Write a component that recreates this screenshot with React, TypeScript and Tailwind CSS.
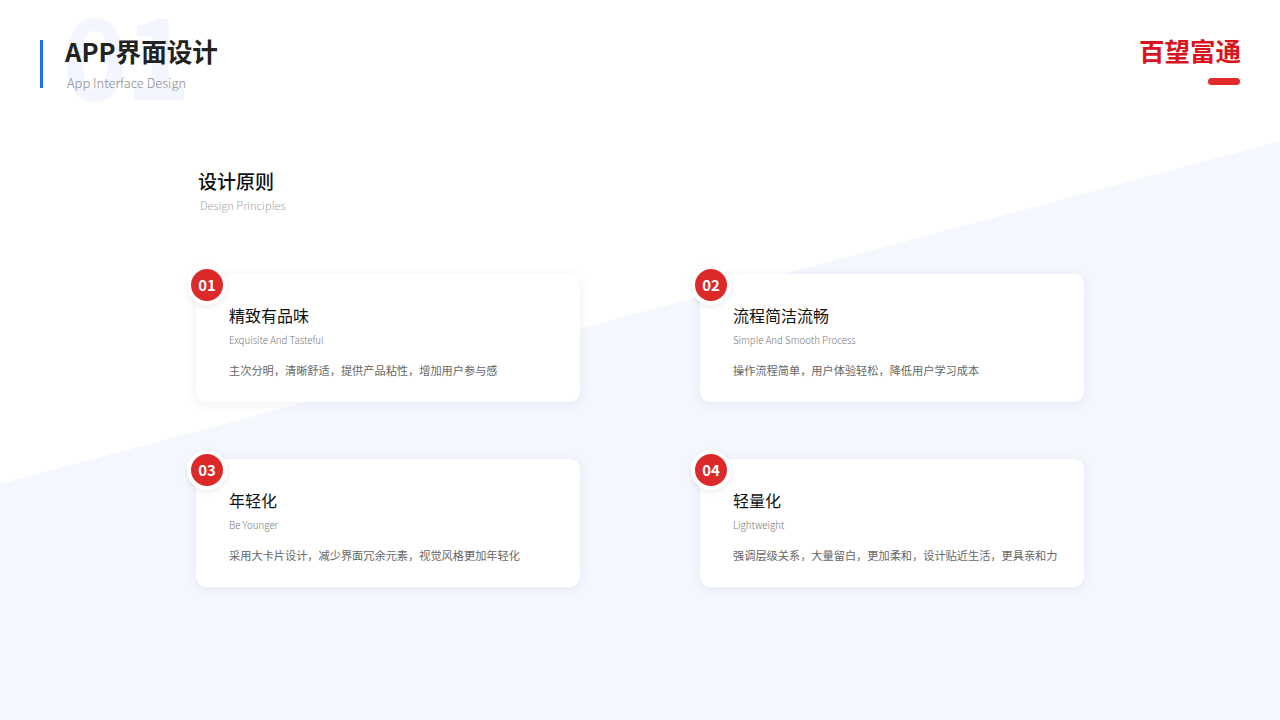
import React from "react";

const cjk = "font-['Noto_Sans_CJK_SC','Noto_Sans',sans-serif]";

const principles = [
  { no: "01", title: "精致有品味", en: "Exquisite And Tasteful", desc: "主次分明，清晰舒适，提供产品粘性，增加用户参与感" },
  { no: "02", title: "流程简洁流畅", en: "Simple And Smooth Process", desc: "操作流程简单，用户体验轻松，降低用户学习成本" },
  { no: "03", title: "年轻化", en: "Be Younger", desc: "采用大卡片设计，减少界面冗余元素，视觉风格更加年轻化" },
  { no: "04", title: "轻量化", en: "Lightweight", desc: "强调层级关系，大量留白，更加柔和，设计贴近生活，更具亲和力" },
];

function Card({ no, title, en, desc }: { no: string; title: string; en: string; desc: string }) {
  return (
    <div className="relative h-[128px] rounded-[10px] bg-white pl-[33px] pt-[29px] shadow-[0_2px_12px_rgba(60,80,140,0.08)]">
      {/* number badge sits over the card corner */}
      <div className="absolute left-[-9px] top-[-9px] flex h-[40px] w-[40px] items-center justify-center rounded-full border-[4px] border-white bg-[#dc2a2a] text-[15px] font-bold text-white shadow-[0_2px_6px_rgba(0,0,0,0.08)]">
        {no}
      </div>
      <h3 className="text-[16px] leading-[24px] text-[#111]">{title}</h3>
      <p className="mt-[5px] text-[9.7px] font-light leading-[16px] text-[#777]">{en}</p>
      <p className="mt-[14px] text-[11.2px] leading-[16px] text-[#666]">{desc}</p>
    </div>
  );
}

export default function App() {
  return (
    <div className={`relative h-[720px] w-[1280px] overflow-hidden bg-white ${cjk}`}>
      {/* diagonal background shape */}
      <svg className="absolute inset-0" width="1280" height="720" viewBox="0 0 1280 720">
        <polygon points="0,484 1280,141 1280,720 0,720" fill="#f4f7fd" />
      </svg>

      <div className="relative flex items-start justify-between pl-[40px] pr-[40px] pt-[40px]">
        <div className="relative h-[48px] border-l-[3px] border-[#1f6ef5] pl-[22px]">
          <span className="absolute left-[19px] top-[-39px] text-[112px] font-bold leading-[100px] tracking-[-3px] text-[#f3f6fe]">
            01
          </span>
          <h1 className="relative mt-[-2px] text-[25.6px] font-bold leading-[26px] text-[#222]">APP界面设计</h1>
          <p className="relative ml-[2px] mt-[9px] text-[12.9px] font-light leading-[20px] text-[#8e8e8e]">App Interface Design</p>
        </div>
        <div className="flex flex-col items-end">
          <div className="mr-[-1px] mt-[-3px] text-[25.5px] font-bold leading-[26px] text-[#d9141c]">百望富通</div>
          <div className="mt-[15px] h-[7px] w-[32px] rounded-full bg-[#e02a2a]" />
        </div>
      </div>

      <div className="relative pl-[196px] pt-[81px]">
        <h2 className="ml-[2px] text-[19px] font-medium leading-[24px] text-[#111]">设计原则</h2>
        <p className="ml-[4px] mt-[3px] text-[11.1px] font-light leading-[18px] text-[#a5a5a5]">Design Principles</p>
        <div className="mt-[60px] grid w-[888px] grid-cols-2 gap-x-[120px] gap-y-[57px]">
          {principles.map((p) => (
            <Card key={p.no} {...p} />
          ))}
        </div>
      </div>
    </div>
  );
}
